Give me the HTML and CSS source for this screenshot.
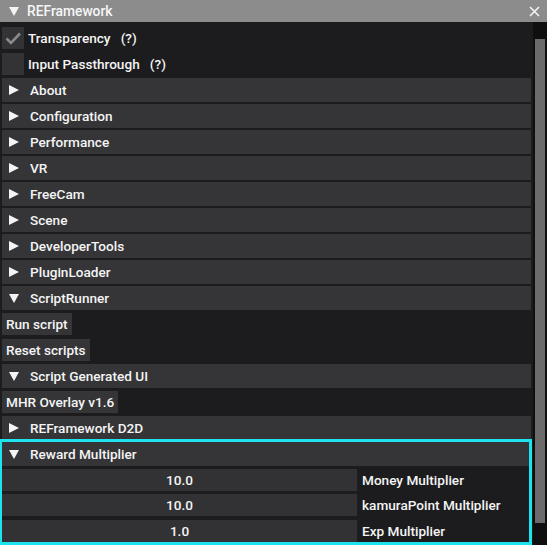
FILE: index.html
```html
<!DOCTYPE html>
<html>
<head>
<meta charset="utf-8">
<link rel="stylesheet" href="styles.css">
</head>
<body>
<div class="window">
  <div class="titlebar">
    <span class="tri-down light"></span>
    <span class="title">REFramework</span>
    <svg class="close" width="11" height="11" viewBox="0 0 11 11"><path d="M1 1 L10 10 M10 1 L1 10" stroke="#f2f2f2" stroke-width="1.6"/></svg>
  </div>
  <div class="main">
    <div class="content">
      <div class="row check-row">
        <span class="checkbox"><svg width="22" height="22" viewBox="0 0 22 22"><path d="M4.5 11.5 L9 16 L18 6.5" fill="none" stroke="#8a8a8c" stroke-width="2.6"/></svg></span>
        <span class="label">Transparency&nbsp;&nbsp;&nbsp;(?)</span>
      </div>
      <div class="row check-row">
        <span class="checkbox"></span>
        <span class="label">Input Passthrough&nbsp;&nbsp;&nbsp;(?)</span>
      </div>
      <div class="header"><span class="tri-right"></span><span>About</span></div>
      <div class="header"><span class="tri-right"></span><span>Configuration</span></div>
      <div class="header"><span class="tri-right"></span><span>Performance</span></div>
      <div class="header"><span class="tri-right"></span><span>VR</span></div>
      <div class="header"><span class="tri-right"></span><span>FreeCam</span></div>
      <div class="header"><span class="tri-right"></span><span>Scene</span></div>
      <div class="header"><span class="tri-right"></span><span>DeveloperTools</span></div>
      <div class="header"><span class="tri-right"></span><span>PluginLoader</span></div>
      <div class="header"><span class="tri-down"></span><span>ScriptRunner</span></div>
      <div class="row"><span class="button">Run script</span></div>
      <div class="row"><span class="button">Reset scripts</span></div>
      <div class="header"><span class="tri-down"></span><span>Script Generated UI</span></div>
      <div class="row"><span class="button">MHR Overlay v1.6</span></div>
      <div class="header"><span class="tri-right"></span><span>REFramework D2D</span></div>
      <div class="highlight">
        <div class="header"><span class="tri-down"></span><span>Reward Multiplier</span></div>
        <div class="input-row"><span class="input">10.0</span><span class="label">Money Multiplier</span></div>
        <div class="input-row"><span class="input">10.0</span><span class="label">kamuraPoint Multiplier</span></div>
        <div class="input-row"><span class="input">1.0</span><span class="label">Exp Multiplier</span></div>
      </div>
    </div>
    <div class="scrollbar"><div class="thumb"></div></div>
  </div>
</div>
</body>
</html>
```

FILE: styles.css
```css
html, body {
  margin: 0;
  padding: 0;
  background: #1c1c1e;
  width: 547px;
  height: 545px;
  overflow: hidden;
}
body {
  font-family: Roboto, "Liberation Sans", sans-serif;
  font-size: 13.6px;
  font-weight: 500;
  color: #f4f4f4;
}
.window {
  display: flex;
  flex-direction: column;
  height: 545px;
}
.titlebar {
  height: 22px;
  background: #8c8c8c;
  display: flex;
  align-items: center;
  padding-left: 9px;
  position: relative;
  flex: none;
}
.title {
  margin-left: 8px;
  color: #f6f6f6;
  font-size: 13.8px;
}
.close {
  position: absolute;
  left: 529px;
  top: 6px;
}
.main {
  flex: 1;
  display: flex;
  min-height: 0;
}
.content {
  width: 530px;
  padding: 4px 1px 0 2px;
  display: flex;
  flex-direction: column;
  gap: 2px;
}
.row {
  height: 24px;
  display: flex;
  align-items: center;
}
.check-row .checkbox {
  width: 22px;
  height: 22px;
  background: #333336;
  display: block;
  margin-right: 4px;
}
.check-row .checkbox svg { display: block; }
.header {
  height: 24px;
  background: #353538;
  display: flex;
  align-items: center;
  padding-left: 7px;
}
.tri-right {
  width: 0;
  height: 0;
  border-top: 5px solid transparent;
  border-bottom: 5px solid transparent;
  border-left: 10px solid #f4f4f4;
  margin-right: 11px;
}
.tri-down {
  width: 0;
  height: 0;
  border-left: 5px solid transparent;
  border-right: 5px solid transparent;
  border-top: 9px solid #f4f4f4;
  margin-right: 11px;
}
.tri-down.light {
  margin-right: 0;
}
.button {
  background: #353538;
  height: 22px;
  display: flex;
  align-items: center;
  padding: 0 4px;
}
.highlight {
  display: flex;
  flex-direction: column;
  gap: 3.5px;
  outline: 3px solid #1de3ee;
  margin-right: 2px;
  padding-bottom: 0;
}
.highlight .header {
  margin-bottom: -1px;
}
.input-row {
  height: 22px;
  display: flex;
  align-items: center;
}
.input {
  width: 355px;
  height: 22px;
  background: #323235;
  display: flex;
  align-items: center;
  justify-content: center;
  margin-right: 5px;
}
.scrollbar {
  width: 14px;
  background: #0f0f10;
  padding: 17px 2px 0 2px;
  box-sizing: border-box;
  margin-left: 1px;
}
.thumb {
  width: 10px;
  height: 484px;
  background: #6b6b6b;
}
```
